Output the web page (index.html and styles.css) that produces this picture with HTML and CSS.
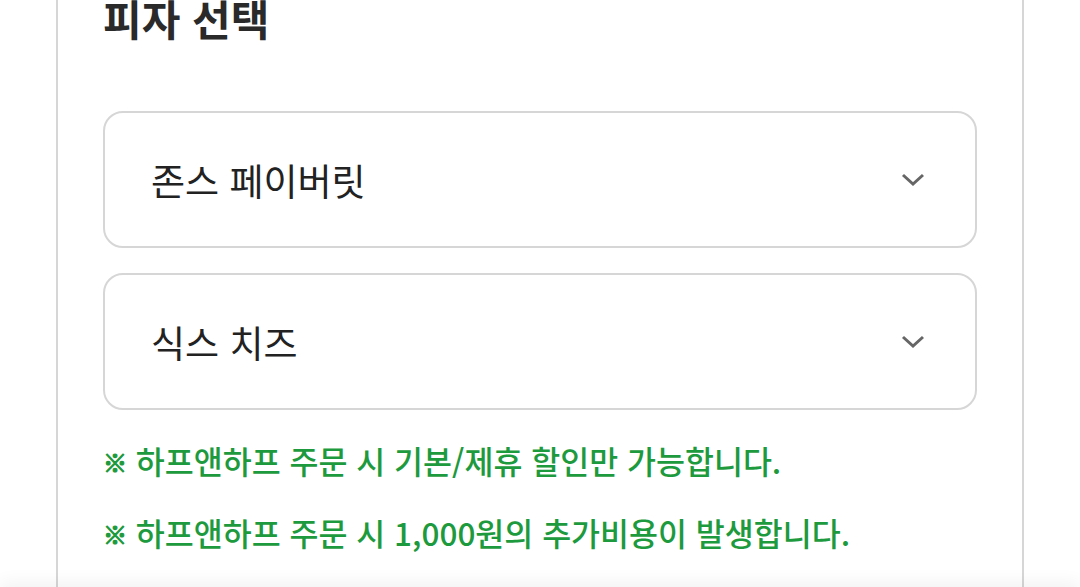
FILE: index.html
```html
<!DOCTYPE html>
<html lang="ko">
<head>
<meta charset="utf-8">
<title>피자 선택</title>
<link rel="stylesheet" href="styles.css">
</head>
<body>
<main class="page">
  <section class="card">
    <h2 class="card-title">피자 선택</h2>
    <div class="selects">
      <div class="select">
        <span class="select-value">존스 페이버릿</span>
        <svg class="chevron" viewBox="0 0 24 14" width="24" height="14" aria-hidden="true"><path d="M2 2l10 9 10-9" fill="none" stroke="#666" stroke-width="3"/></svg>
      </div>
      <div class="select">
        <span class="select-value">식스 치즈</span>
        <svg class="chevron" viewBox="0 0 24 14" width="24" height="14" aria-hidden="true"><path d="M2 2l10 9 10-9" fill="none" stroke="#666" stroke-width="3"/></svg>
      </div>
    </div>
    <ul class="notes">
      <li><span class="note-mark">※</span> 하프앤하프 주문 시 기본/제휴 할인만 가능합니다.</li>
      <li><span class="note-mark">※</span> 하프앤하프 주문 시 1,000원의 추가비용이 발생합니다.</li>
    </ul>
  </section>
</main>
<div class="bottom-bar"></div>
</body>
</html>
```
FILE: styles.css
```css
html, body {
  margin: 0;
  padding: 0;
  background: #fff;
  font-family: "Noto Sans CJK KR", "Noto Sans", sans-serif;
  color: #222;
  overflow: hidden;
}

/* page is scrolled so the card's top edge sits just above the view */
.page {
  padding: 0 56px;
  margin-top: -40px;
}

.card {
  border: 2px solid #d6d6d6;
  border-radius: 24px;
  padding: 30px 45px 60px 45px;
  min-height: 700px;
}

.card-title {
  margin: 0;
  font-size: 42px;
  font-weight: 700;
  line-height: 52px;
  color: #2a2a2a;
}

.selects {
  margin-top: 67px;
  display: flex;
  flex-direction: column;
  gap: 25px;
}

.select {
  height: 133px;
  border: 2px solid #d6d6d6;
  border-radius: 20px;
  display: flex;
  align-items: center;
  justify-content: space-between;
  padding: 0 50px 0 46px;
}

.select-value {
  font-size: 37px;
  color: #222;
}

.chevron {
  display: block;
}

.notes {
  list-style: none;
  margin: 27px 0 0;
  padding: 0;
  display: flex;
  flex-direction: column;
  gap: 24px;
}

.notes li {
  font-size: 31.5px;
  line-height: 46px;
  font-weight: 500;
  color: #1d9a3d;
}

.note-mark {
  font-size: 24px;
  font-weight: 900;
  vertical-align: 2px;
  -webkit-text-stroke: 1.2px #1d9a3d;
}

.bottom-bar {
  position: fixed;
  left: 0;
  right: 0;
  bottom: -20px;
  height: 20px;
  background: #f4f4f4;
  box-shadow: 0 -4px 18px rgba(0, 0, 0, 0.06);
}
```
